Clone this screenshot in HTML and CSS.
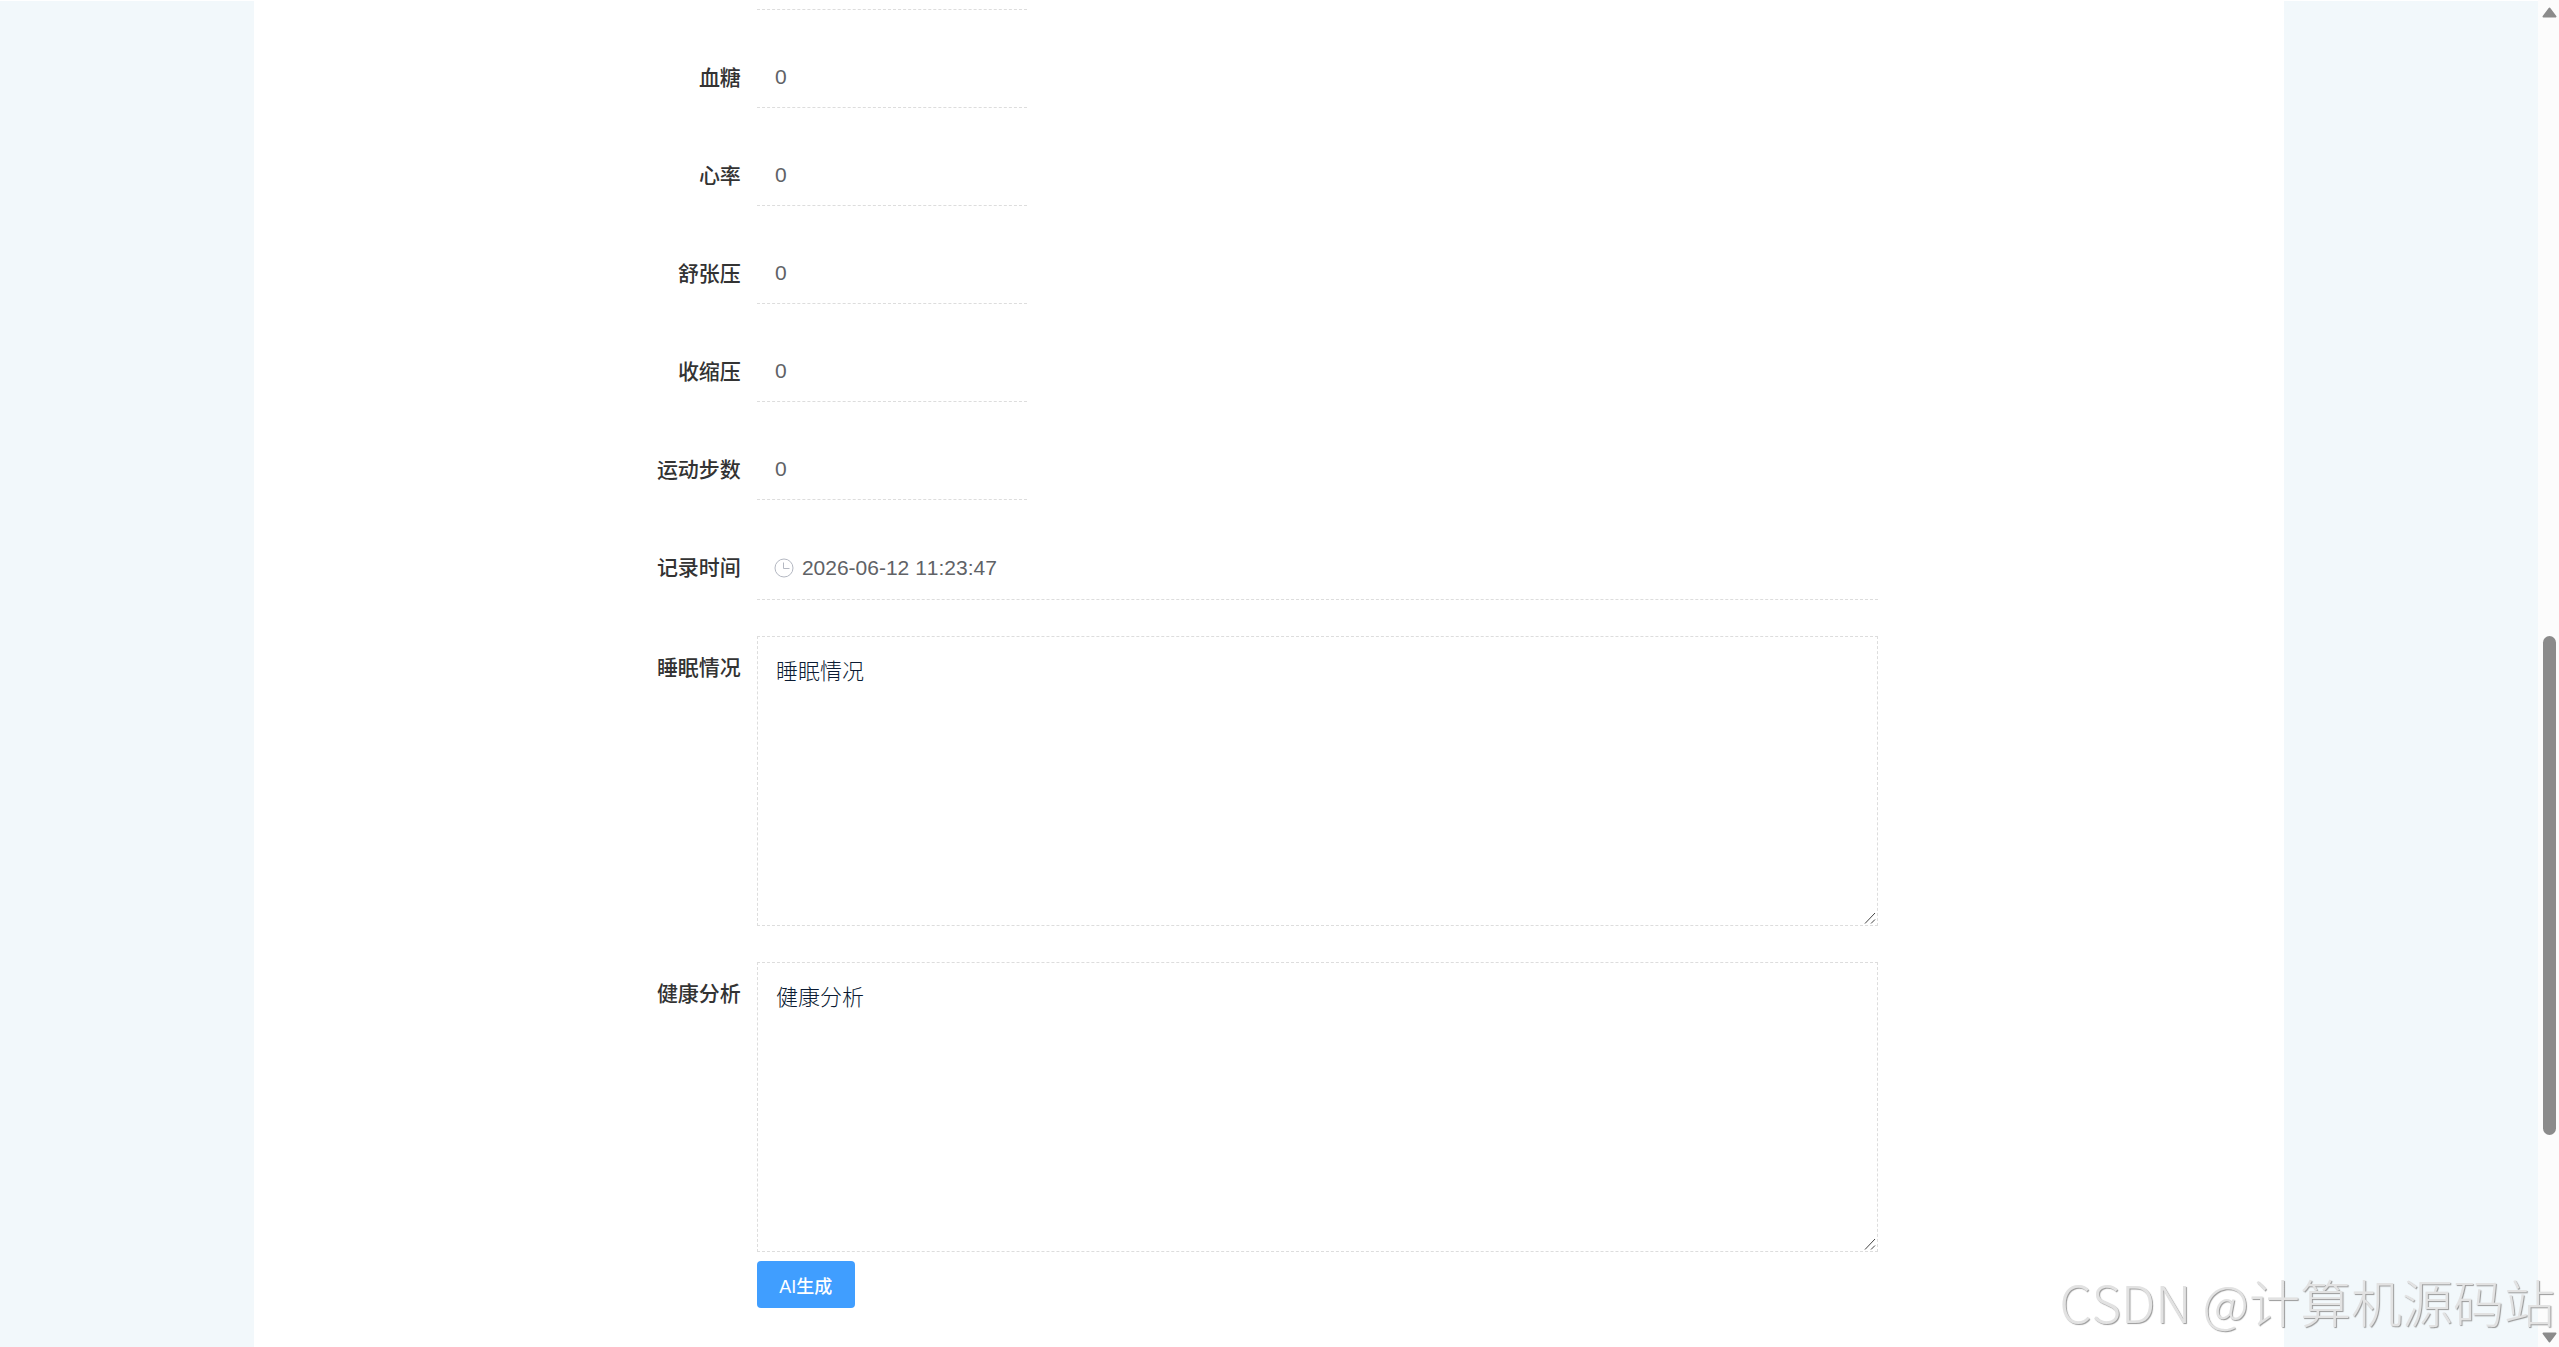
FILE: index.html
```html
<!DOCTYPE html>
<html lang="zh-CN">
<head>
    <meta charset="UTF-8">
    <meta name="viewport" content="width=device-width, initial-scale=1.0">
    <title>健康记录</title>
    <link rel="stylesheet" href="styles.css">
</head>
<body>
    <div class="page">
        <main class="content">
            <form class="record-form">
                <div class="form-item">
                    <div class="field-end"></div>
                </div>
                <div class="form-item">
                    <label for="sugar">血糖</label>
                    <input class="number" type="text" id="sugar" name="sugar" value="0">
                </div>
                <div class="form-item">
                    <label for="heart">心率</label>
                    <input class="number" type="text" id="heart" name="heart" value="0">
                </div>
                <div class="form-item">
                    <label for="diastolic">舒张压</label>
                    <input class="number" type="text" id="diastolic" name="diastolic" value="0">
                </div>
                <div class="form-item">
                    <label for="systolic">收缩压</label>
                    <input class="number" type="text" id="systolic" name="systolic" value="0">
                </div>
                <div class="form-item">
                    <label for="steps">运动步数</label>
                    <input class="number" type="text" id="steps" name="steps" value="0">
                </div>
                <div class="form-item">
                    <label for="time">记录时间</label>
                    <div class="picker">
                        <svg class="clock" viewBox="0 0 20 20">
                            <circle cx="10" cy="10" r="9"/>
                            <path d="M9.5 4.5v6h6"/>
                        </svg>
                        <input type="text" id="time" name="time" value="2026-06-12 11:23:47">
                    </div>
                </div>
                <div class="form-item">
                    <label for="sleep">睡眠情况</label>
                    <div class="area">
                        <textarea id="sleep" name="sleep">睡眠情况</textarea>
                        <svg class="grip" viewBox="0 0 12 12"><path d="M1 11.500L11 1M7 11.500L11 7.500"/></svg>
                    </div>
                </div>
                <div class="form-item">
                    <label for="analysis">健康分析</label>
                    <div class="area">
                        <textarea id="analysis" name="analysis">健康分析</textarea>
                        <svg class="grip" viewBox="0 0 12 12"><path d="M1 11.500L11 1M7 11.500L11 7.500"/></svg>
                        <button type="button">AI生成</button>
                    </div>
                </div>
            </form>
        </main>
    </div>
    <div class="scrollbar">
        <svg class="arrow" viewBox="0 0 15 11"><path d="M7.500 1.500L13.500 9.500H1.500Z"/></svg>
        <div class="track"><div class="thumb"></div></div>
        <svg class="arrow" viewBox="0 0 15 11"><path d="M1.500 1.500H13.500L7.500 9.500Z"/></svg>
    </div>
    <div class="watermark">CSDN @计算机源码站</div>
</body>
</html>
```

FILE: styles.css
```css
* {
    box-sizing: border-box;
}

body {
    margin: 0;
    height: 100vh;
    overflow: hidden;
    display: flex;
    background: #fff;
    font-family: "Liberation Sans", "Noto Sans CJK SC", sans-serif;
    font-size: 21px;
    font-kerning: none;
}

.page {
    flex: 1;
    margin-top: 1px;
    background: #f2f8fb;
}

.content {
    width: 80%;
    height: 100%;
    margin: 0 auto;
    padding: 0 16% 0 calc(16% - 4px);
    background: #fff;
}

.record-form {
    display: flex;
    flex-direction: column;
    gap: 36px;
}

.form-item {
    display: flex;
    align-items: flex-start;
}

label {
    width: 101px;
    padding-right: 16px;
    line-height: 61px;
    text-align: right;
    white-space: nowrap;
    font-family: "Noto Sans CJK SC", sans-serif;
    font-weight: 500;
    color: #333;
}

input,
textarea {
    font: inherit;
    font-kerning: inherit;
    color: #606266;
    background: none;
    border: none;
    border-radius: 0;
    outline: none;
}

.number {
    width: 270px;
    height: 62px;
    padding: 0 18px;
    border-bottom: 1px dashed #ddd;
}

/* bottom edge of the field scrolled off the top */
.field-end {
    width: 270px;
    height: 9px;
    margin-left: 101px;
    border-bottom: 1px dashed #ddd;
}

.picker {
    flex: 1;
    display: flex;
    align-items: center;
    gap: 8px;
    height: 64px;
    padding: 0 17px;
    border-bottom: 1px dashed #ddd;
}

.picker input {
    flex: 1;
    padding: 0;
}

.clock {
    width: 20px;
    height: 20px;
    fill: none;
    stroke: #b4b8c2;
}

.area {
    flex: 1;
    position: relative;
}

textarea {
    display: block;
    width: 100%;
    height: 290px;
    padding: 16px 18px;
    border: 1px dashed #ddd;
    font-family: "Noto Sans CJK SC", sans-serif;
    font-size: 22px;
    font-weight: 300;
    line-height: 32px;
    color: #0b1b33;
    resize: none;
}

.grip {
    position: absolute;
    top: 276px;
    right: 2px;
    width: 12px;
    height: 12px;
    fill: none;
    stroke: #444;
}

button {
    min-width: 98px;
    height: 47px;
    margin-top: 9px;
    padding: 0 22px;
    border: none;
    border-radius: 4px;
    background: #409eff;
    color: #fff;
    font-family: "Liberation Sans", "Noto Sans CJK SC", sans-serif;
    font-size: 18px;
    font-weight: 500;
}

.scrollbar {
    display: flex;
    flex-direction: column;
    align-items: center;
    width: 21px;
    padding: 7px 0 4px 2px;
    background: #fcfcfc;
}

.arrow {
    width: 15px;
    height: 11px;
    fill: #8b8b8b;
    stroke: #8b8b8b;
    stroke-width: 2;
    stroke-linejoin: round;
}

.track {
    flex: 1;
}

.thumb {
    width: 13px;
    height: 38%;
    margin-top: 618px;
    border-radius: 7px;
    background: #8b8b8b;
}

.watermark {
    position: absolute;
    right: 4px;
    bottom: 8px;
    font-family: "Noto Sans CJK SC", sans-serif;
    font-size: 51px;
    font-weight: 300;
    line-height: 76px;
    color: #e2e2e2;
    text-shadow: 1px 1px 1px #999;
}
```
